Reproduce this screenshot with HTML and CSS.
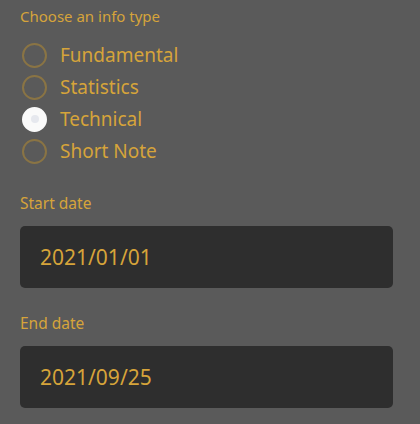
FILE: index.html
```html
<!DOCTYPE html>
<html>
<head>
<meta charset="utf-8">
<link rel="stylesheet" href="styles.css">
</head>
<body>
<div class="panel">
  <div class="group-label">Choose an info type</div>
  <div class="radios">
    <label class="radio"><span class="dot"></span><span class="text">Fundamental</span></label>
    <label class="radio"><span class="dot"></span><span class="text">Statistics</span></label>
    <label class="radio checked"><span class="dot"></span><span class="text">Technical</span></label>
    <label class="radio"><span class="dot"></span><span class="text">Short Note</span></label>
  </div>
  <div class="field">
    <div class="field-label">Start date</div>
    <div class="input">2021/01/01</div>
  </div>
  <div class="field">
    <div class="field-label">End date</div>
    <div class="input">2021/09/25</div>
  </div>
</div>
</body>
</html>
```
FILE: styles.css
```css
html, body {
  margin: 0;
  background: #5a5a5a;
}
.panel {
  padding: 4px 27px 0 20px;
  font-family: "Noto Sans", sans-serif;
  color: #d6a43a;
}
.group-label {
  font-size: 15px;
  line-height: 24px;
  margin-bottom: 11px;
}
.radios {
  display: flex;
  flex-direction: column;
}
.radio {
  display: flex;
  align-items: center;
  height: 32px;
  gap: 13px;
}
.dot {
  box-sizing: border-box;
  width: 25px;
  height: 25px;
  margin-left: 2px;
  border-radius: 50%;
  border: 2px solid #8a7444;
  position: relative;
}
.checked .dot {
  background: #fafafa;
  border-color: #fafafa;
}
.checked .dot::after {
  content: "";
  position: absolute;
  left: 50%;
  top: 50%;
  width: 8px;
  height: 8px;
  margin: -4px 0 0 -4px;
  border-radius: 50%;
  background: #e6e8ee;
}
.text {
  font-size: 19px;
  line-height: 32px;
}
.field {
  margin-top: 24px;
}
.field + .field {
  margin-top: 23px;
}
.field-label {
  font-size: 15.5px;
  line-height: 24px;
  margin-bottom: 11px;
}
.input {
  height: 62px;
  box-sizing: border-box;
  background: #2e2e2e;
  border-radius: 5px;
  padding-left: 20px;
  display: flex;
  align-items: center;
  font-size: 21px;
}
```
